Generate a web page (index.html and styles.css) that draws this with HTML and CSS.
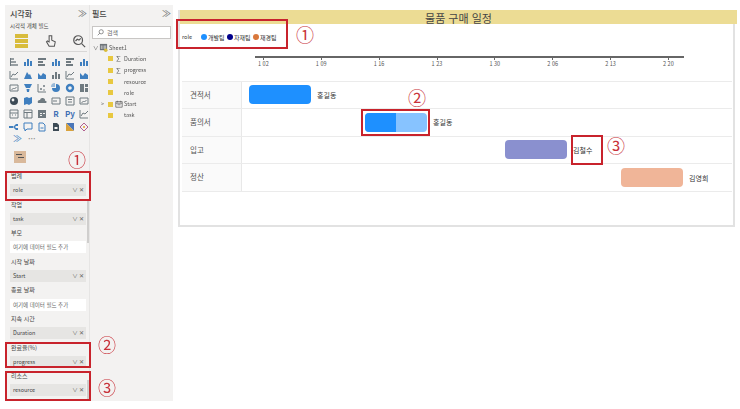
FILE: index.html
```html
<!DOCTYPE html>
<html lang="ko">
  <head>
    <meta charset="UTF-8" />
    <meta name="viewport" content="width=device-width, initial-scale=1.0" />
    <title>물품 구매 일정</title>
    <link rel="stylesheet" href="styles.css">
  </head>
  <body>
    <svg class="sprites" width="0" height="0">
      <symbol id="bars" viewBox="0 0 10 10"><path d="M1 9V5h2v4zM4 9V2h2v7zM7 9V4h2v5z"/></symbol>
      <symbol id="hbars" viewBox="0 0 10 10"><path d="M1 1h8v2H1zM1 4h5v2H1zM1 7h7v2H1z"/></symbol>
      <symbol id="stack" viewBox="0 0 10 10"><path d="M1 1h4v2H1zM1 4h6v2H1zM1 7h8v2H1z" opacity=".7"/><path d="M1 1v8h1V1z"/></symbol>
      <symbol id="line" viewBox="0 0 10 10"><path d="M1 1v8h8M2 7l2-3 2 1 3-3" fill="none" stroke="currentColor"/></symbol>
      <symbol id="area" viewBox="0 0 10 10"><path d="M1 9l3-7 2 3 1-1 2 5z"/></symbol>
      <symbol id="ribbon" viewBox="0 0 10 10"><path d="M1 3l3 3 2-3 3 2v4H1z"/></symbol>
      <symbol id="funnel" viewBox="0 0 10 10"><path d="M1 1h8L7 5H3zM3.5 6h3L6 9H4z"/></symbol>
      <symbol id="scatter" viewBox="0 0 10 10"><path d="M1 1v8h8" fill="none" stroke="currentColor"/><circle cx="4" cy="6" r="1"/><circle cx="7" cy="3" r="1"/><circle cx="7" cy="7" r=".8"/></symbol>
      <symbol id="pie" viewBox="0 0 10 10"><path d="M5 1a4 4 0 1 1-4 4h4z"/><path d="M4 0v4H0a4 4 0 0 1 4-4z" opacity=".5"/></symbol>
      <symbol id="donut" viewBox="0 0 10 10"><circle cx="5" cy="5" r="3" fill="none" stroke="currentColor" stroke-width="2.4"/></symbol>
      <symbol id="tree" viewBox="0 0 10 10"><path d="M1 1h4v8H1zM6 1h3v3H6zM6 5h3v4H6z"/></symbol>
      <symbol id="globe" viewBox="0 0 10 10"><circle cx="5" cy="5" r="4"/><circle cx="4" cy="4" r="1.4" fill="#f3f2f1"/></symbol>
      <symbol id="map" viewBox="0 0 10 10"><path d="M1 2l3-1 2 1 3-1v6L6 9 4 8 1 9z"/></symbol>
      <symbol id="cloud" viewBox="0 0 10 10"><path d="M1 7a2 2 0 0 1 2-3 2.500 2.500 0 0 1 5 1 1 1 0 0 1 1 2z"/></symbol>
      <symbol id="card" viewBox="0 0 10 10"><path d="M1 2h8v6H1zM3 4v2M5 4v2" fill="none" stroke="currentColor"/></symbol>
      <symbol id="list" viewBox="0 0 10 10"><path d="M1 1h8v8H1zM3 3.500h4M3 6h4" fill="none" stroke="currentColor"/></symbol>
      <symbol id="kpi" viewBox="0 0 10 10"><path d="M1 2h8v6H1zM2.500 7l2-2 1 1 2-2" fill="none" stroke="currentColor"/></symbol>
      <symbol id="slicer" viewBox="0 0 10 10"><path d="M1 1h8v8H1zM1 4h8M3 6h1M6 6h1" fill="none" stroke="currentColor"/></symbol>
      <symbol id="table" viewBox="0 0 10 10"><path d="M1 1h8v8H1zM1 3.500h8M4 3.500V9" fill="none" stroke="currentColor"/></symbol>
      <symbol id="matrix" viewBox="0 0 10 10"><path d="M1 1h8v8H1z"/><path d="M3 4h2v1H3zM6 4h2v1H6zM3 6h2v1H3z" fill="#f3f2f1"/></symbol>
      <symbol id="decomp" viewBox="0 0 10 10"><path d="M0 4h4v2H0zM4 5l3-3h2v2H7L6 5l1 1h2v2H7z"/></symbol>
      <symbol id="chat" viewBox="0 0 10 10"><path d="M1 1h8v6H4L2 9V7H1z" fill="none" stroke="currentColor"/></symbol>
      <symbol id="doc" viewBox="0 0 10 10"><path d="M2 1h4l2 2v6H2zM3.500 6h3" fill="none" stroke="currentColor"/></symbol>
      <symbol id="page" viewBox="0 0 10 10"><path d="M2 1h4l2 2v6H2z"/><path d="M3.500 5h3v2h-3z" fill="#f3f2f1"/></symbol>
      <symbol id="apps" viewBox="0 0 10 10"><path d="M1 1h8v8z" fill="#4a76b8"/><path d="M1 1v8h8z" fill="#d9a23c"/></symbol>
      <symbol id="diamond" viewBox="0 0 10 10"><path d="M5 1l4 4-4 4-4-4z" fill="none" stroke="#b2608f"/><circle cx="5" cy="5" r="1" fill="#e0a030"/></symbol>
      <symbol id="sheet" viewBox="0 0 10 10"><path d="M1 1h8v7H1z" fill="#6d7378"/><path d="M2 3h2v1H2zM5 3h3v1H5zM2 5h2v1H2zM5 5h3v1H5z" fill="#f3f2f1"/><circle cx="7.500" cy="8" r="2" fill="#d8bc3c"/></symbol>
      <symbol id="cal" viewBox="0 0 10 10"><path d="M1 2h8v7H1zM1 4h8M3 1v2M7 1v2M3 6h4" fill="none" stroke="currentColor"/></symbol>
    </svg>

    <aside class="pane viz-pane">
      <div class="pane-head"><span>시각화</span><span class="chev">≫</span></div>
      <div class="pane-sub">시각적 개체 빌드</div>
      <div class="tabs">
        <span class="tab-active"></span>
        <svg class="tab-icon" viewBox="0 0 16 16"><path d="M7 2v7L5 8 4 9l3 5h6l1-5-4-2V2z" fill="none" stroke="#555" stroke-width="1.200"/></svg>
        <svg class="tab-icon" viewBox="0 0 16 16"><circle cx="7" cy="7" r="5" fill="none" stroke="#555" stroke-width="1.400"/><path d="M4 8l2-2 2 1 2-2M11 11l4 4" fill="none" stroke="#555" stroke-width="1.400"/></svg>
      </div>
      <div class="tab-rule"></div>
      <div class="viz-grid">
        <svg class="gr"><use href="#stack"/></svg>
        <svg class="bl"><use href="#bars"/></svg>
        <svg class="gr"><use href="#hbars"/></svg>
        <svg class="bl"><use href="#bars"/></svg>
        <svg class="gr"><use href="#hbars"/></svg>
        <svg class="bl"><use href="#bars"/></svg>
        <svg class="gr"><use href="#line"/></svg>
        <svg class="bl"><use href="#area"/></svg>
        <svg class="bl"><use href="#ribbon"/></svg>
        <svg class="gr"><use href="#bars"/></svg>
        <svg class="gr"><use href="#line"/></svg>
        <svg class="bl"><use href="#ribbon"/></svg>
        <svg class="gr"><use href="#kpi"/></svg>
        <svg class="bl"><use href="#funnel"/></svg>
        <svg class="gr"><use href="#scatter"/></svg>
        <svg class="bl"><use href="#pie"/></svg>
        <svg class="bl"><use href="#donut"/></svg>
        <svg class="gr"><use href="#tree"/></svg>
        <svg class="dk"><use href="#globe"/></svg>
        <svg class="bl"><use href="#map"/></svg>
        <svg class="gr"><use href="#cloud"/></svg>
        <svg class="gr"><use href="#card"/></svg>
        <svg class="gr"><use href="#list"/></svg>
        <svg class="gr"><use href="#kpi"/></svg>
        <svg class="gr"><use href="#slicer"/></svg>
        <svg class="gr"><use href="#table"/></svg>
        <svg class="gr"><use href="#matrix"/></svg>
        <span class="viz-text">R</span>
        <span class="viz-text">Py</span>
        <svg class="gr"><use href="#line"/></svg>
        <svg class="bl"><use href="#decomp"/></svg>
        <svg class="bl"><use href="#chat"/></svg>
        <svg class="bl"><use href="#doc"/></svg>
        <svg class="dk"><use href="#page"/></svg>
        <svg><use href="#apps"/></svg>
        <svg><use href="#diamond"/></svg>
      </div>
      <div class="more-row">
        <span class="more-chev">≫</span><span class="more-dots">···</span>
      </div>
      <div class="format-btn"><span></span><span></span></div>

      <div class="wells">
        <div class="well-label">범례</div>
        <div class="well-field"><span>role</span><span class="field-tools">∨ ✕</span></div>
        <div class="well-label">작업</div>
        <div class="well-field"><span>task</span><span class="field-tools">∨ ✕</span></div>
        <div class="well-label">부모</div>
        <div class="well-add">여기에 데이터 필드 추가</div>
        <div class="well-label">시작 날짜</div>
        <div class="well-field"><span>Start</span><span class="field-tools">∨ ✕</span></div>
        <div class="well-label">종료 날짜</div>
        <div class="well-add">여기에 데이터 필드 추가</div>
        <div class="well-label">지속 시간</div>
        <div class="well-field"><span>Duration</span><span class="field-tools">∨ ✕</span></div>
        <div class="well-label">완료율(%)</div>
        <div class="well-field"><span>progress</span><span class="field-tools">∨ ✕</span></div>
        <div class="well-label">리소스</div>
        <div class="well-field"><span>resource</span><span class="field-tools">∨ ✕</span></div>
      </div>
    </aside>

    <aside class="pane fields-pane">
      <div class="pane-head"><span>필드</span><span class="chev">≫</span></div>
      <div class="search-box">
        <svg class="search-icon" viewBox="0 0 10 10"><circle cx="6" cy="4" r="3" fill="none" stroke="#666"/><path d="M4 6L1 9" stroke="#666"/></svg>
        <span>검색</span>
      </div>
      <ul class="tree">
        <li class="tree-table">
          <span class="tree-arrow">∨</span>
          <svg class="tree-icon"><use href="#sheet"/></svg>
          <span>Sheet1</span>
        </li>
        <li><span class="check"></span><span class="kind">∑</span><span>Duration</span></li>
        <li><span class="check"></span><span class="kind">∑</span><span>progress</span></li>
        <li><span class="check"></span><span class="kind"></span><span>resource</span></li>
        <li><span class="check"></span><span class="kind"></span><span>role</span></li>
        <li>
          <span class="tree-expand">&gt;</span>
          <span class="check"></span>
          <span class="kind"><svg class="cal-icon"><use href="#cal"/></svg></span>
          <span>Start</span>
        </li>
        <li><span class="check"></span><span class="kind"></span><span>task</span></li>
      </ul>
    </aside>

    <main class="report">
      <h1 class="report-title">물품 구매 일정</h1>
      <div class="legend">
        <span class="legend-name">role</span>
        <span class="legend-item"><i class="dot dot-dev"></i>개발팀</span>
        <span class="legend-item"><i class="dot dot-buy"></i>자재팀</span>
        <span class="legend-item"><i class="dot dot-acc"></i>재경팀</span>
      </div>
      <div class="axis">
        <div class="axis-ticks">
          <span>1 02</span><span>1 09</span><span>1 16</span><span>1 23</span>
          <span>1 30</span><span>2 06</span><span>2 13</span><span>2 20</span>
        </div>
      </div>
      <div class="gantt">
        <div class="gantt-row">
          <div class="gantt-name">견적서</div>
          <div class="gantt-track">
            <div class="bar bar-dev start-1"></div>
            <span class="bar-label">홍길동</span>
          </div>
        </div>
        <div class="gantt-row">
          <div class="gantt-name">품의서</div>
          <div class="gantt-track">
            <div class="bar bar-partial start-2"><div class="bar-done"></div></div>
            <span class="bar-label">홍길동</span>
          </div>
        </div>
        <div class="gantt-row">
          <div class="gantt-name">입고</div>
          <div class="gantt-track">
            <div class="bar bar-buy start-3"></div>
            <span class="bar-label">김철수</span>
          </div>
        </div>
        <div class="gantt-row">
          <div class="gantt-name">정산</div>
          <div class="gantt-track">
            <div class="bar bar-acc start-4"></div>
            <span class="bar-label">김영희</span>
          </div>
        </div>
      </div>
    </main>

    <!-- Pane scrollbar thumbs -->
    <div class="thumb thumb-top"></div>
    <div class="thumb thumb-bottom"></div>

    <!-- Red annotations over the screenshot -->
    <div class="mark mark-legend"></div>
    <div class="mark mark-bar"></div>
    <div class="mark mark-name"></div>
    <div class="mark mark-well-1"></div>
    <div class="mark mark-well-2"></div>
    <div class="mark mark-well-3"></div>
    <span class="num num-legend">①</span>
    <span class="num num-bar">②</span>
    <span class="num num-name">③</span>
    <span class="num num-well-1">①</span>
    <span class="num num-well-2">②</span>
    <span class="num num-well-3">③</span>
  </body>
</html>
```

FILE: styles.css
```css
* {
  box-sizing: border-box;
}
body {
  margin: 0;
  width: 740px;
  height: 409px;
  overflow: hidden;
  position: relative;
  display: flex;
  align-items: flex-start;
  padding: 5px 0 0 5px;
  background-color: #ffffff;
  color: #333333;
  font-family: "Noto Sans CJK KR", "Noto Sans", sans-serif;
  filter: blur(0.35px);
}
.sprites {
  position: absolute;
}

/* Side panes */
.pane {
  height: 396px;
  background-color: #f3f2f1;
  overflow: hidden;
}
.viz-pane {
  width: 85px;
  padding: 0 2px 0 5px;
  border-right: 1px solid #e6e5e4;
}
.fields-pane {
  width: 83px;
  padding: 0 2px;
}
.pane-head {
  height: 15px;
  margin-top: 1px;
  display: flex;
  justify-content: space-between;
  align-items: center;
  font-size: 8px;
  font-weight: 500;
  color: #444444;
}
.chev {
  font-size: 9px;
  color: #777777;
}
.pane-sub {
  height: 9px;
  margin-top: 1px;
  font-size: 5.500px;
  line-height: 9px;
  color: #444444;
}

.tabs {
  height: 17px;
  margin-top: 1px;
  display: flex;
  align-items: center;
  justify-content: space-between;
  padding: 0 1px 0 5px;
}
.tab-active {
  width: 13px;
  height: 14px;
  background: linear-gradient(#d8bc3c 0 4px, #f3f2f1 4px 5px, #d8bc3c 5px 9px, #f3f2f1 9px 10px, #d8bc3c 10px);
}
.tab-icon {
  width: 14px;
  height: 14px;
}
.tab-rule {
  height: 1px;
  margin-top: 2px;
  background-color: #d8d7d6;
}

.viz-grid {
  margin-top: 3px;
  display: grid;
  grid-template-columns: repeat(6, 14px);
  grid-auto-rows: 13px;
  align-items: center;
  justify-items: center;
  margin-left: -3px;
}
.viz-grid svg {
  width: 10px;
  height: 10px;
  fill: currentColor;
}
.viz-grid .gr {
  color: #6f7a80;
}
.viz-grid .bl {
  color: #3f7fbf;
}
.viz-grid .dk {
  color: #3c4a55;
}
.viz-text {
  font-size: 8px;
  font-weight: 700;
  line-height: 10px;
  color: #3f6fb5;
}
.more-row {
  height: 12px;
  margin-top: 0;
  padding-left: 3px;
  display: flex;
  align-items: center;
  gap: 6px;
  font-size: 9px;
  line-height: 12px;
}
.more-chev {
  color: #3f7fbf;
}
.more-dots {
  color: #888888;
}
.format-btn {
  width: 12px;
  height: 12px;
  margin: 6px 0 0 4px;
  padding: 3px 2px;
  display: flex;
  flex-direction: column;
  gap: 2px;
  background-color: #d9b99b;
}
.format-btn span {
  height: 1px;
  width: 6px;
  background-color: #555555;
}
.format-btn span + span {
  margin-left: 2px;
}

/* Field wells */
.wells {
  margin-top: 6px;
  display: grid;
  grid-template-rows: repeat(16, 14.300px);
  padding-right: 1px;
}
.well-label {
  font-size: 6px;
  line-height: 14px;
  color: #444444;
  padding-left: 1px;
}
.well-field,
.well-add {
  height: 12px;
  margin-top: 1px;
  padding: 0 2px 0 3px;
  font-size: 5.500px;
  line-height: 12px;
  color: #444444;
}
.well-field {
  display: flex;
  justify-content: space-between;
  background-color: #e6e5e3;
}
.well-add {
  background-color: #ffffff;
  color: #666666;
}
.field-tools {
  font-size: 5.500px;
  color: #666666;
}
.thumb {
  position: absolute;
  left: 87px;
  width: 2px;
  background-color: #cfcecd;
}
.thumb-top {
  top: 201px;
  height: 42px;
}
.thumb-bottom {
  top: 380px;
  height: 20px;
}

/* Fields pane */
.search-box {
  height: 13px;
  margin-top: 5px;
  display: flex;
  align-items: center;
  gap: 3px;
  padding-left: 4px;
  background-color: #ffffff;
  border: 1px solid #c8c6c4;
  font-size: 6px;
  color: #666666;
}
.search-icon {
  width: 7px;
  height: 7px;
}
.tree {
  list-style: none;
  margin: 3px 0 0;
  padding: 0;
  font-size: 5.500px;
  color: #555555;
}
.tree li {
  height: 11.300px;
  display: flex;
  align-items: center;
  padding-left: 16px;
  position: relative;
}
.tree .tree-table {
  padding-left: 1px;
}
.tree-arrow {
  width: 5px;
}
.tree-icon {
  width: 9px;
  height: 9px;
  margin: 0 1px 0 1px;
}
.tree-expand {
  position: absolute;
  left: 9px;
  color: #777777;
}
.check {
  width: 5px;
  height: 5px;
  background-color: #e8c840;
}
.kind {
  width: 11px;
  display: flex;
  justify-content: center;
  font-size: 7px;
  line-height: 7px;
  color: #666666;
}
.cal-icon {
  width: 8px;
  height: 8px;
  fill: none;
  color: #666666;
}

/* Report */
.report {
  width: 557px;
  height: 217px;
  margin: 5px 0 0 5px;
  padding-left: 2px;
  background-color: #ffffff;
  border: solid #e2e2e2;
  border-width: 0 2px 2px 2px;
}
.report-title {
  height: 14px;
  margin: 0 0 0 -2px;
  background-color: #ecdc94;
  font-size: 11px;
  font-weight: 400;
  line-height: 17px;
  text-align: center;
  color: #444444;
  width: 557px;
  overflow: visible;
}
.legend {
  height: 25px;
  padding-top: 1px;
  display: flex;
  align-items: center;
  gap: 2px;
  font-size: 5.500px;
  color: #333333;
}
.legend-name {
  width: 17px;
  padding-left: 0;
}
.legend-item {
  width: 26px;
  display: flex;
  align-items: center;
  gap: 1px;
  margin-right: -2px;
  font-size: 6px;
  white-space: nowrap;
}
.dot {
  width: 6px;
  height: 6px;
  border-radius: 50%;
}
.dot-dev {
  background-color: #1e90ff;
}
.dot-buy {
  background-color: #00008b;
}
.dot-acc {
  background-color: #d9783c;
}

.axis {
  height: 24.500px;
  margin: 7px 0 0 73px;
  width: 429px;
  border-top: 2px solid #666666;
}
.axis-ticks {
  display: grid;
  grid-template-columns: repeat(8, 57.860px);
  padding-left: 8px;
}
.axis-ticks span {
  position: relative;
  padding-top: 2px;
  font-size: 5.500px;
  line-height: 9px;
  color: #555555;
  white-space: nowrap;
  transform: translateX(-5px);
}
.axis-ticks span::before {
  content: "";
  position: absolute;
  top: 0;
  left: 5px;
  width: 1px;
  height: 2px;
  background-color: #666666;
}

/* Gantt rows */
.gantt {
  width: 550px;
  border-top: 1px solid #ebebeb;
}
.gantt-row {
  height: 27.600px;
  display: grid;
  grid-template-columns: 60px 1fr;
  border-bottom: 1px solid #ebebeb;
}
.gantt-name {
  padding-left: 8px;
  font-size: 7.500px;
  line-height: 26px;
  color: #555555;
  background-color: #fafafa;
  border-right: 1px solid #e8e8e8;
}
.gantt-track {
  display: flex;
  align-items: center;
  gap: 6px;
}
.bar {
  width: 62px;
  height: 19px;
  border-radius: 4px;
  overflow: hidden;
}
.start-1 {
  margin-left: 7px;
}
.start-2 {
  margin-left: 123px;
}
.start-3 {
  margin-left: 263px;
}
.start-4 {
  margin-left: 379px;
}
.bar-dev {
  background-color: #1e90ff;
}
.bar-partial {
  background-color: #87c3ff;
}
.bar-done {
  width: 50%;
  height: 100%;
  background-color: #1e90ff;
}
.bar-buy {
  background-color: #8a90cf;
}
.bar-acc {
  background-color: #f0b598;
}
.bar-label {
  font-size: 7px;
  color: #333333;
  white-space: nowrap;
}

/* Red annotations */
.mark {
  position: absolute;
  border: 2px solid #c8232c;
}
.mark-legend {
  left: 176px;
  top: 19px;
  width: 112px;
  height: 30px;
}
.mark-bar {
  left: 361px;
  top: 109px;
  width: 69px;
  height: 27px;
}
.mark-name {
  left: 571px;
  top: 135px;
  width: 32px;
  height: 30px;
}
.mark-well-1 {
  left: 5px;
  top: 171px;
  width: 86px;
  height: 30px;
}
.mark-well-2 {
  left: 5px;
  top: 342px;
  width: 86px;
  height: 26px;
}
.mark-well-3 {
  left: 5px;
  top: 371px;
  width: 86px;
  height: 30px;
}
.num {
  position: absolute;
  font-size: 18px;
  line-height: 20px;
  color: #c8323a;
}
.num-legend {
  left: 296px;
  top: 24px;
}
.num-bar {
  left: 408px;
  top: 87px;
}
.num-name {
  left: 607px;
  top: 135px;
}
.num-well-1 {
  left: 68px;
  top: 149px;
}
.num-well-2 {
  left: 98px;
  top: 334px;
}
.num-well-3 {
  left: 98px;
  top: 377px;
}
```
